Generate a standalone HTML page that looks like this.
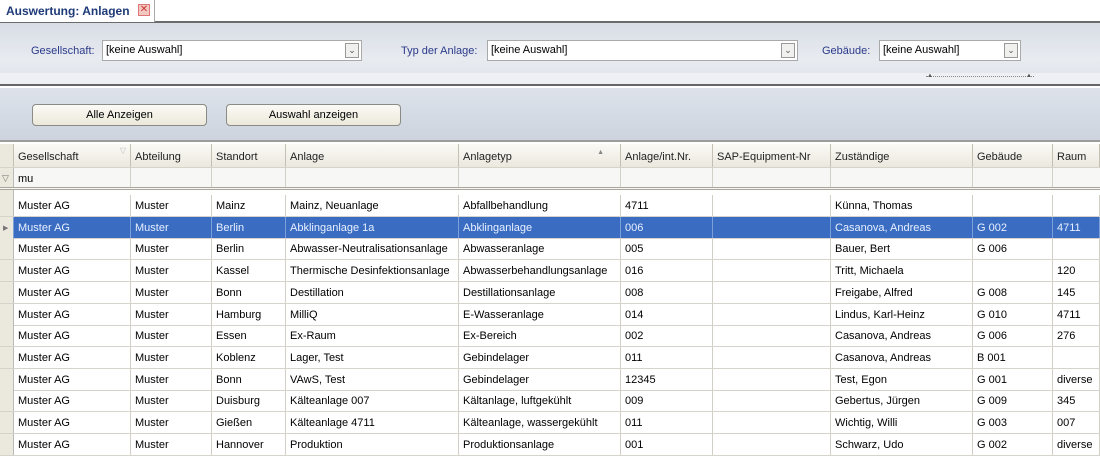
<!DOCTYPE html>
<html><head><meta charset="utf-8"><style>
*{margin:0;padding:0;box-sizing:border-box}
body{width:1100px;height:458px;overflow:hidden;background:#fff;font-family:"Liberation Sans",sans-serif;font-size:11px;color:#000;position:relative}
.abs{position:absolute}
.tabbar{left:0;top:0;width:1100px;height:23px;background:#fff;border-bottom:2px solid #6b6b6b}
.tab{left:0;top:0;width:155px;height:22px;background:#fff;border-right:1px solid #aaa;font-weight:bold;color:#1e3a78;font-size:12px;padding:4px 0 0 6px}
.x{left:138px;top:4px;width:12px;height:12px;border:1px solid #d77;background:#f3c8c0;color:#c33;font-size:10px;line-height:10px;text-align:center}
.fp{left:0;top:23px;width:1100px;height:63px;background:linear-gradient(#d8dde6,#e8ebf0 60%,#dfe3ea);border-bottom:2px solid #666}
.fp .strip{position:absolute;left:0;top:50px;width:1100px;height:11px;background:#eef0f4}
.lbl{color:#2a3a8a;font-size:11px}
.sel{height:21px;background:#fff;border:1px solid #a9a9a9;padding:3px 3px;font-size:11px}
.dd{position:absolute;right:2px;top:2px;width:14px;height:15px;border:1px solid #999;background:#f0f0ee;color:#555;font-size:9px;text-align:center;line-height:13px}
.bp{left:0;top:88px;width:1100px;height:52px;background:linear-gradient(#dde2ea,#cdd4de)}
.btn{height:22px;border:1px solid #8a8a86;border-radius:4px;background:linear-gradient(#fbfaf5,#ece8da);text-align:center;line-height:20px;font-size:11px}
.grid{left:0;top:140px;width:1100px;height:318px;background:#fff;border-top:2px solid #9c9c9c}
.row{position:absolute;left:0;width:1100px;height:22px;border-bottom:1px solid #d6d3cc}
.c{position:absolute;top:0;height:100%;border-right:1px solid #d2cfc7;padding:5px 0 0 4px;white-space:nowrap;overflow:hidden}
.hdr .c{background:linear-gradient(#fbfaf6,#ebe8de);border-right:1px solid #c4c0b4;padding-top:7px;color:#222}
.ind{background:#ebe8de !important;border-right:1px solid #bbb}
.selr{background:#3a6dc2}
.selr .c{color:#e8f0ff;border-right:1px solid #7d9fd8}
</style></head><body>
<div class="abs tabbar"></div>
<div class="abs tab">Auswertung: Anlagen</div>
<div class="abs x">✕</div>
<div class="abs fp"><div class="strip"></div></div>
<div class="abs" style="left:926px;top:76px;width:108px;height:4px;border-top:1px dotted #888"></div>
<div class="abs" style="left:927px;top:73px;font-size:6px;color:#555">▲</div>
<div class="abs" style="left:1026px;top:73px;font-size:6px;color:#555">▲</div>
<div class="abs lbl" style="left:31px;top:45px">Gesellschaft:</div>
<div class="abs sel" style="left:102px;top:40px;width:260px">[keine Auswahl]<div class="dd">⌄</div></div>
<div class="abs lbl" style="left:401px;top:45px">Typ der Anlage:</div>
<div class="abs sel" style="left:487px;top:40px;width:311px">[keine Auswahl]<div class="dd">⌄</div></div>
<div class="abs lbl" style="left:822px;top:45px">Gebäude:</div>
<div class="abs sel" style="left:879px;top:40px;width:142px">[keine Auswahl]<div class="dd">⌄</div></div>
<div class="abs bp"></div>
<div class="abs btn" style="left:32px;top:104px;width:175px">Alle Anzeigen</div>
<div class="abs btn" style="left:226px;top:104px;width:175px">Auswahl anzeigen</div>
<div class="abs grid">
<div class="row hdr" style="top:2px;height:24px">
<div class="c ind" style="left:0;width:14px"></div>
<div class="c" style="left:14px;width:117px">Gesellschaft<span style="position:absolute;right:4px;top:2px;color:#bbb;font-size:8px">▽</span></div>
<div class="c" style="left:131px;width:81px">Abteilung</div>
<div class="c" style="left:212px;width:74px">Standort</div>
<div class="c" style="left:286px;width:173px">Anlage</div>
<div class="c" style="left:459px;width:162px">Anlagetyp<span style="position:absolute;right:16px;top:5px;color:#888;font-size:7px">▲</span></div>
<div class="c" style="left:621px;width:92px">Anlage/int.Nr.</div>
<div class="c" style="left:713px;width:118px">SAP-Equipment-Nr</div>
<div class="c" style="left:831px;width:142px">Zuständige</div>
<div class="c" style="left:973px;width:80px">Gebäude</div>
<div class="c" style="left:1053px;width:47px">Raum</div>
</div>
<div class="row" style="top:26px;height:22px;border-bottom:3px double #a9a59a;background:#f7f7f5">
<div class="c ind" style="left:0;width:14px;color:#777;padding-left:2px;font-size:9px">▽</div>
<div class="c" style="left:14px;width:117px">mu</div>
<div class="c" style="left:131px;width:81px"></div><div class="c" style="left:212px;width:74px"></div><div class="c" style="left:286px;width:173px"></div><div class="c" style="left:459px;width:162px"></div><div class="c" style="left:621px;width:92px"></div><div class="c" style="left:713px;width:118px"></div><div class="c" style="left:831px;width:142px"></div><div class="c" style="left:973px;width:80px"></div>
</div>
<div class="row" style="top:48px;height:7px;border-bottom:none"><div class="c ind" style="left:0;width:14px"></div></div>
</div>
<div id="rows"></div>
<script>
var d=[
["Mainz","Mainz, Neuanlage","Abfallbehandlung","4711","Künna, Thomas","",""],
["Berlin","Abklinganlage 1a","Abklinganlage","006","Casanova, Andreas","G 002","4711"],
["Berlin","Abwasser-Neutralisationsanlage","Abwasseranlage","005","Bauer, Bert","G 006",""],
["Kassel","Thermische Desinfektionsanlage","Abwasserbehandlungsanlage","016","Tritt, Michaela","","120"],
["Bonn","Destillation","Destillationsanlage","008","Freigabe, Alfred","G 008","145"],
["Hamburg","MilliQ","E-Wasseranlage","014","Lindus, Karl-Heinz","G 010","4711"],
["Essen","Ex-Raum","Ex-Bereich","002","Casanova, Andreas","G 006","276"],
["Koblenz","Lager, Test","Gebindelager","011","Casanova, Andreas","B 001",""],
["Bonn","VAwS, Test","Gebindelager","12345","Test, Egon","G 001","diverse"],
["Duisburg","Kälteanlage 007","Kältanlage, luftgekühlt","009","Gebertus, Jürgen","G 009","345"],
["Gießen","Kälteanlage 4711","Kälteanlage, wassergekühlt","011","Wichtig, Willi","G 003","007"],
["Hannover","Produktion","Produktionsanlage","001","Schwarz, Udo","G 002","diverse"]];
var L=[[14,117],[131,81],[212,74],[286,173],[459,162],[621,92],[713,118],[831,142],[973,80],[1053,47]];
var h="";
d.forEach(function(r,i){
 var v=["Muster AG","Muster",r[0],r[1],r[2],r[3],"",r[4],r[5],r[6]];
 var t=195+i*21.7;
 h+='<div class="row'+(i==1?' selr':'')+'" style="top:'+t+'px;height:22px"><div class="c ind" style="left:0;width:14px;color:#777;font-size:7px;padding:7px 0 0 3px">'+(i==1?'▶':'')+'</div>';
 L.forEach(function(c,j){h+='<div class="c" style="left:'+c[0]+'px;width:'+c[1]+'px">'+v[j]+'</div>';});
 h+='</div>';
});
document.getElementById("rows").innerHTML=h;
</script>
</body></html>
